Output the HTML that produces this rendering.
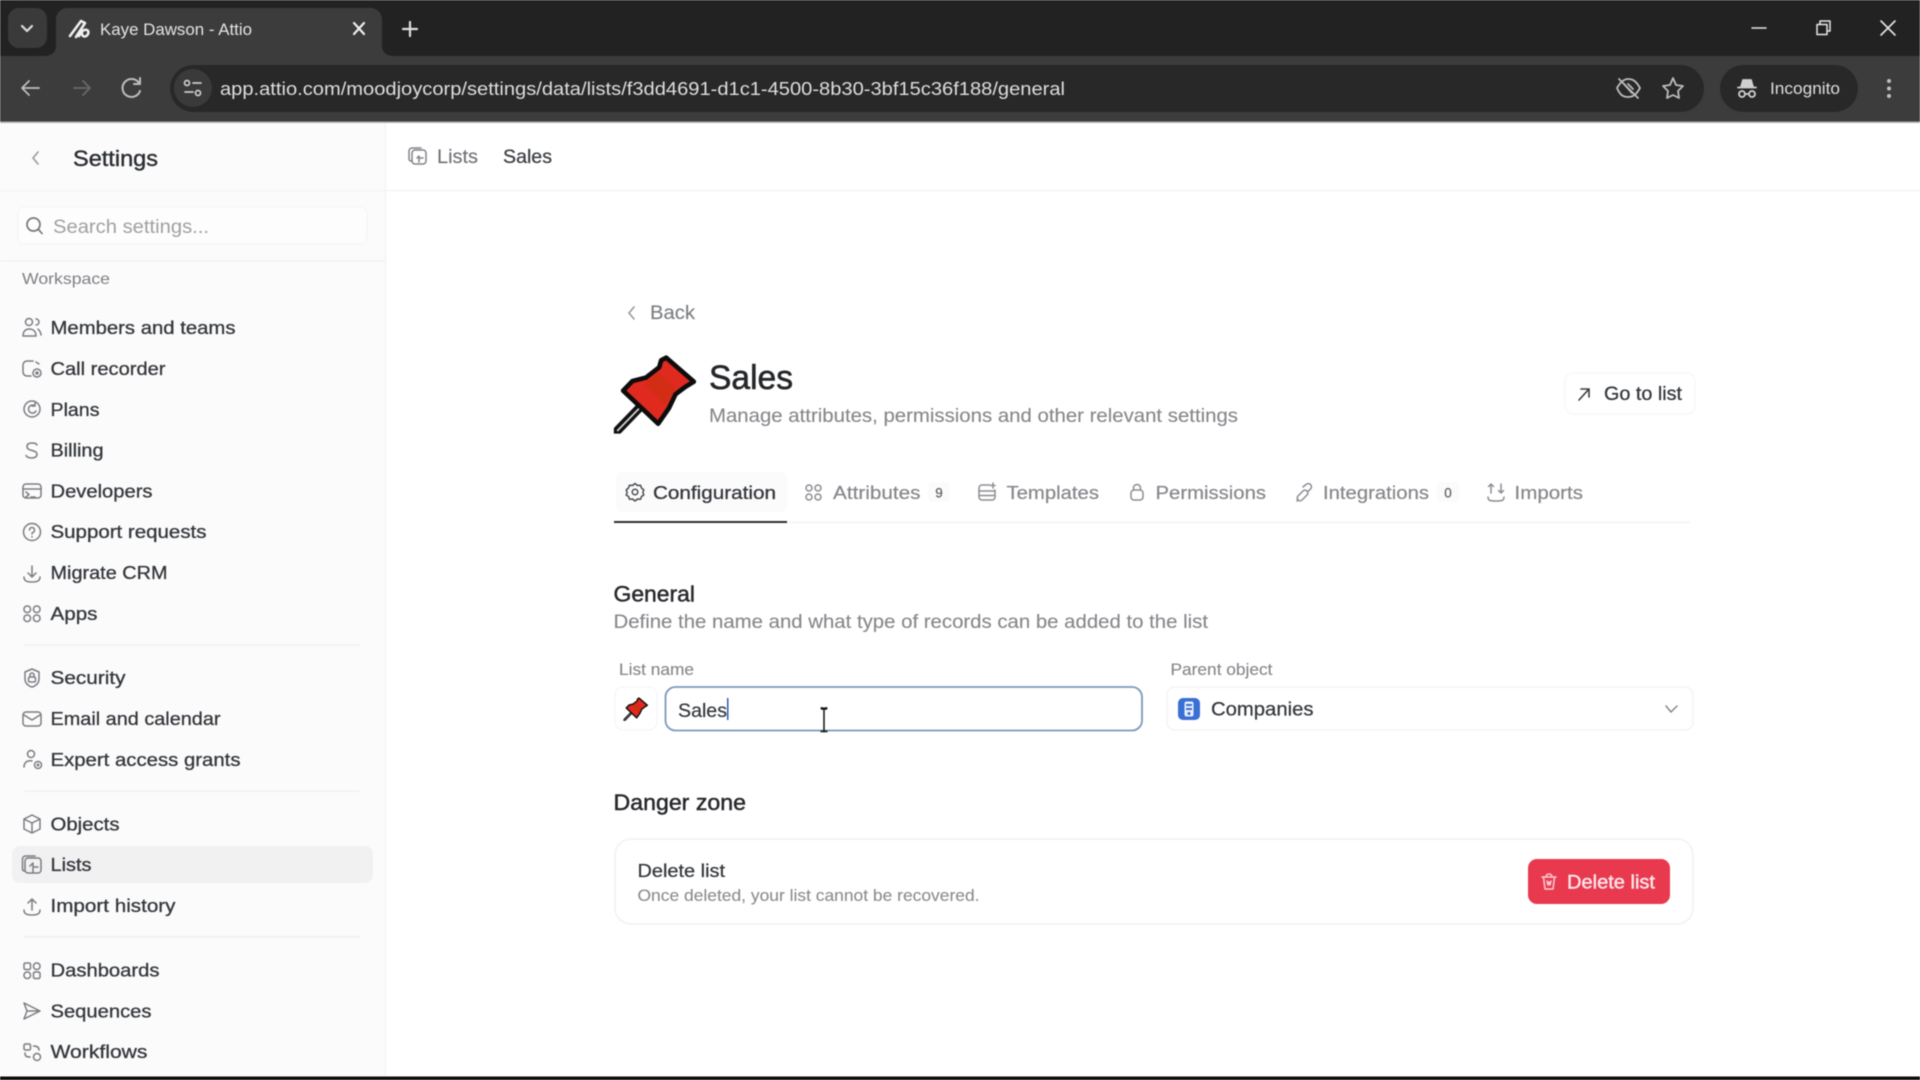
<!DOCTYPE html>
<html lang="en"><head><meta charset="utf-8"><title>Kaye Dawson - Attio</title>
<style>
html,body{margin:0;padding:0;background:#fff;width:1920px;height:1080px;overflow:hidden}
svg{display:block;filter:blur(.55px)}
text{font-family:"Liberation Sans",sans-serif;dominant-baseline:auto}
.nav text{font-size:18px;fill:#34373c;stroke:#34373c;stroke-width:.3px}
.ni{fill:none;stroke:#7a7d82;stroke-width:1.5;stroke-linecap:round;stroke-linejoin:round}
.chrome{fill:none;stroke:#c8c8c8;stroke-width:1.8;stroke-linecap:round;stroke-linejoin:round}
.tab text{font-size:18.5px;fill:#85878b;stroke:#85878b;stroke-width:.2px}
.sub{font-size:18.5px;fill:#85878b;stroke:#85878b;stroke-width:.12px}
</style></head><body>
<svg width="1920" height="1080" viewBox="0 0 1920 1080" xmlns="http://www.w3.org/2000/svg">
<defs>
<clipPath id="pc"><rect x="34" y="0" width="270" height="284"/></clipPath>
<g id="pin" clip-path="url(#pc)">
<path d="M112 205L32 288" stroke="#111" stroke-width="26" fill="none"/>
<path d="M118 200L44 276" stroke="#d8d8d8" stroke-width="5" fill="none"/>
<path d="M191 56L274 128L248 144L219 166L199 208L167 254L62 155L90 126L130 116L170 85L176 64Z" fill="#e0291f" stroke="#0d0d0d" stroke-width="14" stroke-linejoin="round"/>
<path d="M170 100L218 150L188 198L125 135Z" fill="#c9300f" opacity=".6"/>
</g>
</defs>

<!-- Browser chrome -->
<rect width="1920" height="122" fill="#222222"/>
<rect y="56" width="1920" height="66" fill="#3c3c3c"/>
<rect y="121.500" width="1920" height="1.500" fill="#b0b0b0"/>
<path d="M44 56C52 56 56 52 56 46V20C56 13 61 8 68 8H370C377 8 382 13 382 20V46C382 52 386 56 394 56Z" fill="#3c3c3c"/>
<rect x="8" y="8" width="39" height="40" rx="11" fill="#3a3a3a"/>
<path d="M22 26L27 31L32 26" class="chrome" style="stroke-width:2.2px;stroke:#ddd"/>
<path d="M70 36L81 21L85 23L76 37M79 36C83 27 90 29 88 34C86 38 81 37 82 32" class="chrome" style="stroke:#efefef;stroke-width:2.6px"/>
<text x="100" y="35" font-size="17" fill="#e3e3e3" textLength="152" lengthAdjust="spacingAndGlyphs">Kaye Dawson - Attio</text>
<path d="M354 23L364 34M364 23L354 34" class="chrome" style="stroke:#eee;stroke-width:2.2px"/>
<path d="M410 22V36M403 29H417" class="chrome" style="stroke:#ddd;stroke-width:2.2px"/>
<path d="M1752 28H1766" class="chrome" style="stroke:#e5e5e5;stroke-width:1.500px"/>
<path d="M1817 24.500H1827V34.500H1817ZM1820 24V21H1830V31H1827" class="chrome" style="stroke:#e5e5e5;stroke-width:1.500px"/>
<path d="M1881 21L1895 35M1895 21L1881 35" class="chrome" style="stroke:#e5e5e5;stroke-width:1.600px"/>

<path d="M39 88H23M29 81L22 88L29 95" class="chrome" style="stroke:#bdbdbd"/>
<path d="M74 88H89M83 81L90 88L83 95" class="chrome" style="stroke:#686868"/>
<path d="M139 83A9 9 0 1 0 140 91M140 78V84H134" class="chrome" style="stroke:#bdbdbd;stroke-width:2px"/>
<rect x="170" y="65" width="1534" height="47" rx="23.500" fill="#282828"/>
<circle cx="193" cy="88" r="19" fill="#3a3a3a"/>
<g class="chrome" style="stroke-width:1.700px;stroke:#ccc">
<circle cx="187" cy="83" r="2.500"/><path d="M193 83H201M185 92H193"/><circle cx="198" cy="93" r="2.500"/>
</g>
<text x="220" y="95" font-size="18" fill="#dedede" textLength="845" lengthAdjust="spacingAndGlyphs">app.attio.com/moodjoycorp/settings/data/lists/f3dd4691-d1c1-4500-8b30-3bf15c36f188/general</text>
<g class="chrome" style="stroke:#bcbcbc">
<path d="M1617 88C1621 81 1625 79 1628 79C1633 79 1636 81 1640 88C1636 95 1633 97 1628 97C1623 97 1620 95 1617 88Z"/><path d="M1624 84L1632 93M1628 84L1633 89"/><path d="M1619 79L1638 98"/>
<path d="M1673 78L1676 85L1683 86L1678 91L1679 98L1673 95L1667 98L1668 91L1663 86L1670 85Z"/>
</g>
<rect x="1720" y="65" width="138" height="47" rx="23.500" fill="#282828"/>
<g class="chrome" style="stroke-width:1.800px;stroke:#d0d0d0">
<path d="M1741 87L1743 80H1751L1753 87H1741Z" fill="#d0d0d0"/><path d="M1738 87.500H1756"/><circle cx="1742" cy="94" r="3"/><circle cx="1752" cy="94" r="3"/><path d="M1745 94H1749"/>
</g>
<text x="1770" y="94" font-size="17" fill="#dedede" textLength="70" lengthAdjust="spacingAndGlyphs">Incognito</text>
<g fill="#c0c0c0"><circle cx="1889" cy="81" r="2"/><circle cx="1889" cy="88.500" r="2"/><circle cx="1889" cy="96" r="2"/></g>

<!-- Sidebar -->
<rect y="123" width="385" height="953" fill="#fbfbfb"/>
<rect x="385" y="123" width="1" height="953" fill="#f1f1f1"/>
<rect y="190" width="1920" height="1.500" fill="#f4f4f4"/>
<rect y="260" width="385" height="1.500" fill="#f2f2f2"/>
<path d="M38 152L33 158L38 164" fill="none" stroke="#9a9a9a" stroke-width="1.600" stroke-linecap="round"/>
<text x="73" y="166" font-size="22" fill="#2b2e33" stroke="#2b2e33" stroke-width=".4" textLength="85" lengthAdjust="spacingAndGlyphs">Settings</text>
<rect x="18" y="207" width="349" height="37" rx="6" fill="#fdfdfd" stroke="#f5f5f5"/>
<circle cx="33.500" cy="224.500" r="6.500" fill="none" stroke="#777" stroke-width="1.700"/><path d="M38.500 229.500L42 233.500" stroke="#777" stroke-width="1.700" stroke-linecap="round"/>
<text x="53" y="233" font-size="19" fill="#a0a0a0" textLength="156" lengthAdjust="spacingAndGlyphs">Search settings...</text>
<text x="22" y="284" font-size="16" fill="#7d7f83" textLength="88" lengthAdjust="spacingAndGlyphs">Workspace</text>

<g fill="#eeeeee">
<rect x="24" y="644.500" width="336" height="1.200"/><rect x="24" y="790.500" width="336" height="1.200"/><rect x="24" y="936" width="336" height="1.200"/>
</g>
<rect x="12" y="846" width="361" height="37" rx="8" fill="#f1f1f2"/>

<g class="nav">
<text x="50.500" y="334" textLength="185" lengthAdjust="spacingAndGlyphs">Members and teams</text>
<text x="50.500" y="375" textLength="115" lengthAdjust="spacingAndGlyphs">Call recorder</text>
<text x="50.500" y="416" textLength="49" lengthAdjust="spacingAndGlyphs">Plans</text>
<text x="50.500" y="456.500" textLength="53" lengthAdjust="spacingAndGlyphs">Billing</text>
<text x="50.500" y="497.500" textLength="102" lengthAdjust="spacingAndGlyphs">Developers</text>
<text x="50.500" y="538" textLength="156" lengthAdjust="spacingAndGlyphs">Support requests</text>
<text x="50.500" y="579" textLength="117" lengthAdjust="spacingAndGlyphs">Migrate CRM</text>
<text x="50.500" y="620" textLength="47" lengthAdjust="spacingAndGlyphs">Apps</text>
<text x="50.500" y="684" textLength="75" lengthAdjust="spacingAndGlyphs">Security</text>
<text x="50.500" y="725" textLength="170" lengthAdjust="spacingAndGlyphs">Email and calendar</text>
<text x="50.500" y="766" textLength="190" lengthAdjust="spacingAndGlyphs">Expert access grants</text>
<text x="50.500" y="830.500" textLength="69" lengthAdjust="spacingAndGlyphs">Objects</text>
<text x="50.500" y="871" textLength="41" lengthAdjust="spacingAndGlyphs">Lists</text>
<text x="50.500" y="912" textLength="125" lengthAdjust="spacingAndGlyphs">Import history</text>
<text x="50.500" y="976.500" textLength="109" lengthAdjust="spacingAndGlyphs">Dashboards</text>
<text x="50.500" y="1017.500" textLength="101" lengthAdjust="spacingAndGlyphs">Sequences</text>
<text x="50.500" y="1058" textLength="97" lengthAdjust="spacingAndGlyphs">Workflows</text>
</g>

<g class="ni">
<!-- members -->
<circle cx="29" cy="322" r="3.500"/><path d="M23 336C23 331 26 329 29 329C33 329 36 331 36 336Z"/><path d="M36 319A3 3 0 0 1 36 325M38 329C40 331 41 333 41 335"/>
<!-- call -->
<path d="M33 361H27A4 4 0 0 0 23 365V372A4 4 0 0 0 27 376H31"/><circle cx="37" cy="373" r="4"/><circle cx="37" cy="373" r="1" fill="#7a7d82"/><path d="M36 362L39 364"/>
<!-- plans -->
<circle cx="32" cy="409" r="8"/><path d="M35 406A4 4 0 1 0 36 411M35 403V406H32"/>
<!-- billing -->
<path d="M37 445C36 443 34 443 32 443C29 443 27 444 27 446.500C27 452 37 449 37 454.500C37 457 34 458 32 458C29 458 27 457.500 26 455.500"/>
<!-- developers -->
<rect x="23" y="484" width="18" height="14" rx="3"/><path d="M23 489H41M26 492L29 494.500L26 497M31 497H35"/>
<!-- support -->
<circle cx="32" cy="532" r="8.500"/><path d="M29.500 530A2.500 2.500 0 1 1 32.500 532.500C32 533 32 533.500 32 534"/><path d="M32 536.500V537"/>
<!-- migrate -->
<path d="M32 566V577M28 573L32 577L36 573M24 577C24 581 27 582 32 582C37 582 40 581 40 577"/>
<!-- apps -->
<rect x="24" y="606" width="6.500" height="6.500" rx="3"/><rect x="33.500" y="606" width="6.500" height="6.500" rx="3"/><rect x="24" y="615" width="6.500" height="6.500" rx="3"/><rect x="33.500" y="615" width="6.500" height="6.500" rx="3"/>
<!-- security -->
<path d="M32 669L39 672V679C39 683 36 686 32 687C28 686 25 683 25 679V672Z"/><rect x="28.500" y="677" width="7" height="5" rx="1.500"/><path d="M30 677V675A2 2 0 0 1 34 675V677"/>
<!-- email -->
<rect x="23" y="712" width="18" height="14" rx="3"/><path d="M24 715L32 720L40 715"/>
<!-- expert -->
<circle cx="31" cy="754" r="3.500"/><path d="M24 767C24 762 28 760 32 761"/><circle cx="38" cy="765" r="3.500"/><circle cx="38" cy="765" r=".7"/>
<!-- objects -->
<path d="M32 815L40 819V829L32 833L24 829V819ZM24 819L32 823L40 819M32 823V833"/>
<!-- lists -->
<rect x="25" y="858" width="16" height="15" rx="3"/><path d="M25 871H24A2 2 0 0 1 22.500 869V859A3 3 0 0 1 25.500 856H35M30 866L33 863V872M33 867H38"/>
<!-- import -->
<path d="M32 899V910M28 903L32 899L36 903M24 910C24 914 27 915 32 915C37 915 40 914 40 910"/>
<!-- dashboards -->
<rect x="24" y="963" width="6.500" height="6.500" rx="1.500"/><rect x="33.500" y="963" width="6.500" height="6.500" rx="3"/><rect x="24" y="972" width="6.500" height="6.500" rx="3"/><rect x="33.500" y="972" width="6.500" height="6.500" rx="1.500"/>
<!-- sequences -->
<path d="M24 1003L40 1011L24 1019L27 1011ZM27 1011H40"/>
<!-- workflows -->
<rect x="24" y="1044" width="6.500" height="6" rx="1.500"/><circle cx="37" cy="1057" r="3.500"/><path d="M33.500 1046C37 1046 39 1047 39 1050M30 1057C26 1057 25 1056 25 1053"/>
</g>

<!-- Main header -->
<g class="ni" style="stroke:#80838a">
<rect x="412" y="150" width="14" height="14" rx="3"/><path d="M412 161H411A2 2 0 0 1 409 159V151A3 3 0 0 1 412 148H421M417 158L419 156V162M419 158H423"/>
</g>
<text x="437" y="163" font-size="19" fill="#6f7276" stroke="#6f7276" stroke-width=".15" textLength="41" lengthAdjust="spacingAndGlyphs">Lists</text>
<text x="503" y="163" font-size="19" fill="#3a3d42" stroke="#3a3d42" stroke-width=".25" textLength="49" lengthAdjust="spacingAndGlyphs">Sales</text>

<!-- Back -->
<path d="M634 307L629 313L634 319" fill="none" stroke="#9a9a9a" stroke-width="1.600" stroke-linecap="round"/>
<text x="650" y="319" font-size="19" fill="#7d7f83" stroke="#7d7f83" stroke-width=".15" textLength="45" lengthAdjust="spacingAndGlyphs">Back</text>

<!-- Title -->
<use href="#pin" transform="translate(602.500,339) scale(.3333)"/>
<text x="709" y="389" font-size="34" fill="#25272b" stroke="#25272b" stroke-width=".6" textLength="84" lengthAdjust="spacingAndGlyphs">Sales</text>
<text x="709" y="422" class="sub" textLength="529" lengthAdjust="spacingAndGlyphs" style="font-size:19.500px">Manage attributes, permissions and other relevant settings</text>
<rect x="1565" y="373" width="130" height="41" rx="8" fill="#fff" stroke="#f5f5f5"/>
<path d="M1579 400L1589 389M1581 389H1589V397" fill="none" stroke="#3a3d42" stroke-width="1.600" stroke-linecap="round" stroke-linejoin="round"/>
<text x="1604" y="400" font-size="19" fill="#34373c" stroke="#34373c" stroke-width=".3" textLength="78" lengthAdjust="spacingAndGlyphs">Go to list</text>

<!-- Tabs -->
<rect x="616" y="472" width="171" height="40" rx="6" fill="#fbfbfb"/>
<rect x="614" y="521.500" width="1076" height="1.500" fill="#f3f3f3"/>
<rect x="614" y="521" width="173" height="2" fill="#2d2f33"/>
<g class="ni" style="stroke:#4a4d52">
<circle cx="635" cy="492" r="2.800"/><path d="M635 483.500L637.500 485.500L640.500 485.200L641.500 488L643.800 490L642.800 492.500L643.800 495L641.500 496.500L640.500 499.300L637.500 499L635 501L632.500 499L629.500 499.300L628.500 496.500L626.200 495L627.200 492.500L626.200 490L628.500 488L629.500 485.200L632.500 485.500Z"/>
</g>
<g class="ni" style="stroke:#8a8d92">
<rect x="806" y="485" width="6" height="6" rx="3"/><rect x="815" y="485" width="6" height="6" rx="3"/><rect x="806" y="494" width="6" height="6" rx="3"/><rect x="815" y="494" width="6" height="6" rx="3"/>
<path d="M990 485H982A3 3 0 0 0 979 488V497A3 3 0 0 0 982 500H992A3 3 0 0 0 995 497V490M979 491H995M979 495.500H995M993 483V488M991 485.500H995"/>
<rect x="1131" y="490" width="12" height="10" rx="3"/><path d="M1133.500 490V488A3.500 3.500 0 0 1 1140.500 488V490"/>
<path d="M1298 496L1303 491A2.800 2.800 0 0 1 1307 495L1302 500A2.800 2.800 0 0 1 1298 496ZM1303 487L1306 484.500A2.800 2.800 0 0 1 1310.500 489L1308 491.500M1298 499L1297 501"/>
<path d="M1491 484V493M1488.500 486.500L1491 484L1493.500 486.500M1501 484V493M1498.500 490.500L1501 493L1503.500 490.500M1488 497C1488 501 1491 501 1496 501C1501 501 1504 501 1504 497"/>
</g>
<text x="653" y="499" font-size="18.500" fill="#34373c" stroke="#34373c" stroke-width=".3" textLength="123" lengthAdjust="spacingAndGlyphs">Configuration</text>
<g class="tab">
<text x="833" y="499" textLength="87.500" lengthAdjust="spacingAndGlyphs">Attributes</text>
<text x="1006.500" y="499" textLength="92.500" lengthAdjust="spacingAndGlyphs">Templates</text>
<text x="1155.500" y="499" textLength="110.500" lengthAdjust="spacingAndGlyphs">Permissions</text>
<text x="1323" y="499" textLength="106" lengthAdjust="spacingAndGlyphs">Integrations</text>
<text x="1514.500" y="499" textLength="68.500" lengthAdjust="spacingAndGlyphs">Imports</text>
</g>
<rect x="928" y="482" width="22" height="20" rx="4" fill="#fbfbfb"/><rect x="1437" y="482" width="22" height="20" rx="4" fill="#fbfbfb"/>
<text x="939" y="497.500" font-size="13.500" text-anchor="middle" fill="#5f6266" stroke="#5f6266" stroke-width=".2">9</text>
<text x="1448" y="497.500" font-size="13.500" text-anchor="middle" fill="#5f6266" stroke="#5f6266" stroke-width=".2">0</text>

<!-- General -->
<text x="613.500" y="601.500" font-size="22" fill="#26282c" stroke="#26282c" stroke-width=".45" textLength="81.500" lengthAdjust="spacingAndGlyphs">General</text>
<text x="613.500" y="628" style="font-size:19px" class="sub" textLength="594.500" lengthAdjust="spacingAndGlyphs">Define the name and what type of records can be added to the list</text>
<text x="619" y="675" font-size="16.500" fill="#85878b" stroke="#85878b" stroke-width=".12" textLength="75" lengthAdjust="spacingAndGlyphs">List name</text>
<text x="1170.500" y="675" font-size="16.500" fill="#85878b" stroke="#85878b" stroke-width=".12" textLength="102" lengthAdjust="spacingAndGlyphs">Parent object</text>

<rect x="615" y="687" width="42" height="43" rx="8" fill="#fff" stroke="#f3f3f3"/>
<use href="#pin" transform="translate(620,692.500) scale(.1)"/>
<rect x="665.500" y="687" width="476.500" height="43.500" rx="10" fill="#fff" stroke="#7d98bf" stroke-width="1.800"/>
<text x="678" y="717" font-size="19.500" fill="#34373c" stroke="#34373c" stroke-width=".2" textLength="49" lengthAdjust="spacingAndGlyphs">Sales</text>
<rect x="727" y="698" width="1.500" height="22" fill="#2c5db0"/>
<path d="M821 709H827M824 709V731M820.500 731.500H827.500M820.500 708H823L824 709L825 708H827.500" fill="none" stroke="#111" stroke-width="1.500"/>

<rect x="1167" y="687" width="526" height="43" rx="8" fill="#fff" stroke="#f3f3f3" stroke-width="1.500"/>
<rect x="1178" y="698" width="22" height="22" rx="5" fill="#3a6fd4"/>
<rect x="1184.500" y="701.500" width="9" height="15" rx="2" fill="#e8effb"/>
<rect x="1186" y="704" width="6" height="2" fill="#3a6fd4"/><rect x="1186" y="708" width="6" height="2" fill="#3a6fd4"/><circle cx="1189" cy="713.500" r="1.500" fill="#3a6fd4"/>
<text x="1211" y="715.500" font-size="19" fill="#34373c" stroke="#34373c" stroke-width=".25" textLength="102.500" lengthAdjust="spacingAndGlyphs">Companies</text>
<path d="M1666 706L1671 712L1677 706" fill="none" stroke="#888" stroke-width="1.500" stroke-linecap="round" stroke-linejoin="round"/>

<!-- Danger zone -->
<text x="613.500" y="810" font-size="22" fill="#26282c" stroke="#26282c" stroke-width=".45" textLength="132.500" lengthAdjust="spacingAndGlyphs">Danger zone</text>
<rect x="615" y="839" width="1078" height="85" rx="16" fill="#fff" stroke="#f1f1f1" stroke-width="1.500"/>
<text x="637.500" y="877" font-size="18.500" fill="#34373c" stroke="#34373c" stroke-width=".25" textLength="87.500" lengthAdjust="spacingAndGlyphs">Delete list</text>
<text x="637.500" y="901" font-size="16.500" fill="#8a8c90" stroke="#8a8c90" stroke-width=".1" textLength="342" lengthAdjust="spacingAndGlyphs">Once deleted, your list cannot be recovered.</text>
<rect x="1528" y="859" width="142" height="45" rx="9" fill="#e8394f"/>
<g fill="none" stroke="#fbcdd3" stroke-width="1.500" stroke-linecap="round" stroke-linejoin="round">
<path d="M1542 877H1556M1543.500 877L1545 889H1553L1554.500 877M1546 877C1546 873 1552 873 1552 877M1547 881L1548 885L1549 882L1550 885L1551 881"/>
</g>
<text x="1567" y="888.500" font-size="19" fill="#fde7ea" stroke="#fde7ea" stroke-width=".4" textLength="88" lengthAdjust="spacingAndGlyphs">Delete list</text>

<!-- bottom stripe -->
<rect y="1076.500" width="1920" height="3.500" fill="#0c0c0c"/>
</svg>
</body></html>
